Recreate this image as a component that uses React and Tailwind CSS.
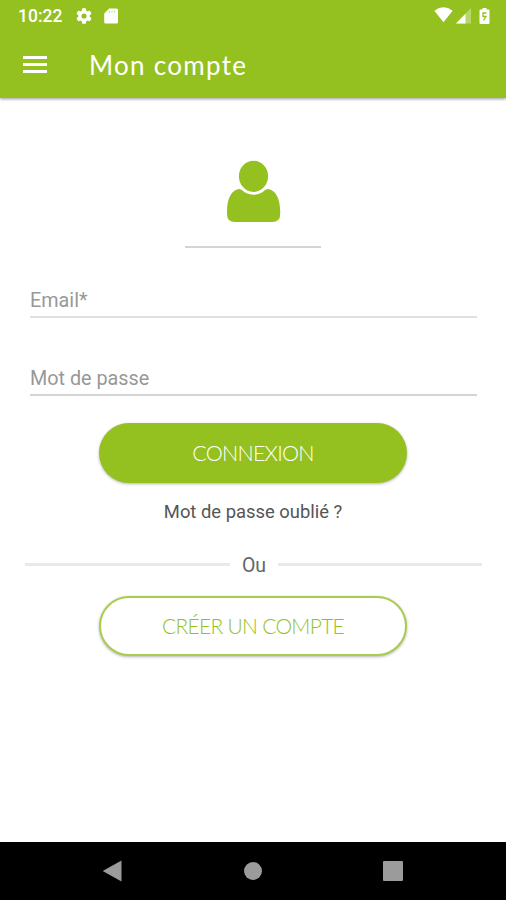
import clsx from "clsx";

function StatusBar() {
  return (
    <div className="flex h-8 items-center pl-[18px] pr-4 text-white">
      <span className="w-[58px] text-[17.5px] leading-8 font-medium">10:22</span>
      <svg className="size-4" viewBox="2 2 20 20" fill="currentColor">
        <path d="M19.14 12.94a7 7 0 0 0 0-1.88l2.03-1.58a.5.5 0 0 0 .12-.61l-1.92-3.32a.5.5 0 0 0-.59-.22l-2.39.96a7 7 0 0 0-1.62-.94l-.36-2.54A.5.5 0 0 0 13.92 2.4h-3.84a.5.5 0 0 0-.47.41l-.36 2.54a7 7 0 0 0-1.62.94l-2.39-.96a.5.5 0 0 0-.59.22L2.74 8.87a.5.5 0 0 0 .12.61l2.03 1.58a7 7 0 0 0 0 1.88l-2.03 1.58a.5.5 0 0 0-.12.61l1.92 3.32c.12.22.37.29.59.22l2.39-.96c.5.38 1.03.7 1.62.94l.36 2.54c.05.24.24.41.48.41h3.84c.24 0 .44-.17.47-.41l.36-2.54a7 7 0 0 0 1.62-.94l2.39.96c.22.08.47 0 .59-.22l1.92-3.32a.5.5 0 0 0-.12-.61zM12 15.2a3.2 3.2 0 1 1 0-6.4 3.2 3.2 0 0 1 0 6.4z" />
      </svg>
      <svg className="ml-3 h-4 w-[14px]" viewBox="0 0 14 16">
        <path d="M5.2 0.5H12.5Q14 .5 14 2V14Q14 15.5 12.5 15.5H1.7Q.2 15.5 .2 14V5.5z" fill="currentColor" />
        <path d="M5.5 2.5V5M8 2.5V5M10.5 2.5V5" stroke="#94c11f" strokeOpacity=".45" />
      </svg>
      <svg className="mb-[3px] ml-auto h-4 w-[19px]" viewBox="0 0 20 16" fill="currentColor">
        <path d="M.4 3.5Q10-3.8 19.6 3.5L10 15.5z" />
      </svg>
      <svg className="ml-[3px] h-4 w-[15px]" viewBox="0 0 15 16" fill="currentColor">
        <path d="M15 0V15.5H0z" opacity=".35" />
        <path d="M9.5 5.7V15.5H0z" />
      </svg>
      <svg className="mb-px ml-2 h-[18px] w-[11px]" viewBox="0 0 11 18">
        <path d="M3.5 1h4v1.5h2q1 0 1 1V16q0 1-1 1h-8q-1 0-1-1V3.5q0-1 1-1h2z" fill="currentColor" />
        <path d="M7.5 6H4V9.500H7L4.500 13.500" fill="none" stroke="#94c11f" strokeWidth="1.3" />
      </svg>
    </div>
  );
}

function Field({ label, className }) {
  return (
    <div className={clsx("mr-[29px] ml-[30px] border-b-2 pt-px text-[19.8px] leading-6 text-[#989898]", className)}>
      {label}
    </div>
  );
}

function PillButton({ children, className }) {
  return (
    <button
      className={clsx(
        "mx-auto flex h-[60px] w-[308px] items-center justify-center rounded-full font-['Lato','Liberation_Sans',sans-serif] shadow-[0_1px_3px_rgba(0,0,0,0.3)]",
        className
      )}
    >
      {children}
    </button>
  );
}

export default function App() {
  return (
    <div className="flex h-[900px] w-[506px] flex-col overflow-hidden bg-white font-['Roboto','Liberation_Sans',sans-serif]">
      <header className="h-[98px] shrink-0 bg-[#94c11f] shadow-[0_1px_3px_rgba(0,0,0,0.4)]">
        <StatusBar />
        <div className="flex h-[66px] items-center pl-[23px] text-white">
          <div className="mb-0.5 flex w-6 flex-col gap-[4px]">
            <div className="h-[3px] bg-white" />
            <div className="h-[3px] bg-white" />
            <div className="h-[3px] bg-white" />
          </div>
          <h1 className="ml-[42px] font-['Lato','Liberation_Sans',sans-serif] text-[26px] tracking-[1.3px]">Mon compte</h1>
        </div>
      </header>

      <main className="flex-1">
        {/* Avatar */}
        <div className="mx-auto flex h-[150px] w-[136px] flex-col items-center border-b-2 border-[#d4d4d4] pt-[62px]">
          <svg className="h-[63px] w-[55px]" viewBox="0 0 55 63" fill="#94c11f">
            <path d="M13 29q3 0 5.5 2.6 9 5.2 18 0Q39 29 42 29c8 1 12 10 12.2 22v3q0 8-8 8H9q-8 0-8-8v-3C1.2 39 5 30 13 29z" />
            <ellipse cx="27.5" cy="16.3" rx="16" ry="17" stroke="#fff" strokeWidth="2.8" />
          </svg>
        </div>

        <Field label="Email*" className="mt-10 h-[30px] border-[#e0e0e0]" />
        <Field label="Mot de passe" className="mt-12 h-[30px] border-[#d4d4d4]" />

        <PillButton className="mt-[27px] bg-[#94c11f] text-[21.5px] font-light tracking-[-0.75px] text-white">
          CONNEXION
        </PillButton>

        <p className="mt-[17px] text-center text-[18.4px] leading-6 text-[#555]">Mot de passe oublié ?</p>

        <div className="mt-[28px] flex h-6 items-center pr-6 pl-[25px]">
          <div className="h-[3px] w-[205px] bg-[#e9e9e9]" />
          <span className="flex-1 pt-[3px] text-center text-[19.5px] leading-6 text-[#666]">Ou</span>
          <div className="h-[3px] w-[204px] bg-[#e9e9e9]" />
        </div>

        <PillButton className="mt-5 border-2 border-[#a9cc50] bg-white text-[21px] font-light tracking-[-0.7px] text-[#94c11f]">
          CRÉER UN COMPTE
        </PillButton>
      </main>

      <nav className="flex h-[58px] shrink-0 items-center bg-black pl-[102px]">
        <svg className="h-[22px] w-5" viewBox="0 0 20 22" fill="#9b9b9b">
          <path d="M.7 11L19.5.5v21z" />
        </svg>
        <div className="ml-[122px] size-[18px] rounded-full bg-[#9b9b9b]" />
        <div className="ml-[121px] size-5 rounded-[1px] bg-[#9b9b9b]" />
      </nav>
    </div>
  );
}
